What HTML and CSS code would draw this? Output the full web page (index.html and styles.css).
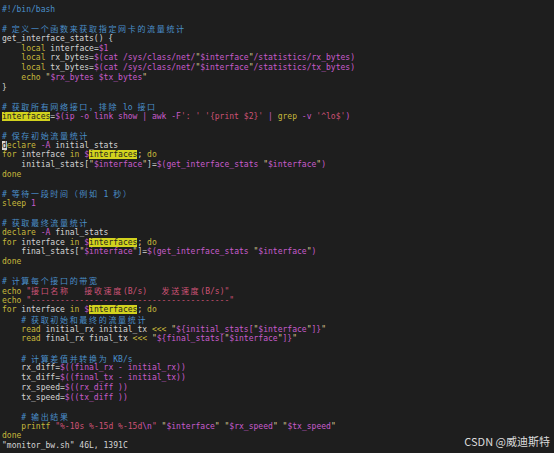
FILE: index.html
```html
<!DOCTYPE html>
<html>
<head>
    <title>monitor_bw.sh - vim</title>
    <meta charset="UTF-8">
    <link rel="stylesheet" href="styles.css">
</head>
<body>
    <div class="terminal">
        <div class="line"><span class="c">#!/bin/bash</span></div>
        <div class="line"></div>
        <div class="line"><span class="c"># <span class="w">定义一个函数来获取指定网卡的流量统计</span></span></div>
        <div class="line">get_interface_stats() {</div>
        <div class="line">    <span class="k">local</span> interface=<span class="v">$1</span></div>
        <div class="line">    <span class="k">local</span> rx_bytes=<span class="v">$(cat /sys/class/net/</span><span class="q">"</span><span class="v">$interface</span><span class="q">"</span><span class="v">/statistics/rx_bytes)</span></div>
        <div class="line">    <span class="k">local</span> tx_bytes=<span class="v">$(cat /sys/class/net/</span><span class="q">"</span><span class="v">$interface</span><span class="q">"</span><span class="v">/statistics/tx_bytes)</span></div>
        <div class="line">    <span class="k">echo</span> <span class="q">"</span><span class="v">$rx_bytes $tx_bytes</span><span class="q">"</span></div>
        <div class="line">}</div>
        <div class="line"></div>
        <div class="line"><span class="c"># <span class="w">获取所有网络接口，排除</span> lo <span class="w">接口</span></span></div>
        <div class="line"><span class="hl">interfaces</span>=<span class="v">$(ip -o link show | awk -F</span><span class="s">': '</span> <span class="s">'{print $2}'</span><span class="v"> | </span><span class="k">grep</span> <span class="v">-v</span> <span class="s">'^lo$'</span><span class="v">)</span></div>
        <div class="line"></div>
        <div class="line"><span class="c"># <span class="w">保存初始流量统计</span></span></div>
        <div class="line"><span class="k"><span class="cur">d</span>eclare</span> <span class="v">-A</span> initial_stats</div>
        <div class="line"><span class="k">for</span> interface <span class="k">in</span> <span class="v">$</span><span class="hl">interfaces</span>; <span class="k">do</span></div>
        <div class="line">    initial_stats[<span class="q">"</span><span class="v">$interface</span><span class="q">"</span>]=<span class="v">$(get_interface_stats </span><span class="q">"</span><span class="v">$interface</span><span class="q">"</span><span class="v">)</span></div>
        <div class="line"><span class="k">done</span></div>
        <div class="line"></div>
        <div class="line"><span class="c"># <span class="w">等待一段时间（例如</span> 1 <span class="w">秒）</span></span></div>
        <div class="line"><span class="k">sleep</span> <span class="v">1</span></div>
        <div class="line"></div>
        <div class="line"><span class="c"># <span class="w">获取最终流量统计</span></span></div>
        <div class="line"><span class="k">declare</span> <span class="v">-A</span> final_stats</div>
        <div class="line"><span class="k">for</span> interface <span class="k">in</span> <span class="v">$</span><span class="hl">interfaces</span>; <span class="k">do</span></div>
        <div class="line">    final_stats[<span class="q">"</span><span class="v">$interface</span><span class="q">"</span>]=<span class="v">$(get_interface_stats </span><span class="q">"</span><span class="v">$interface</span><span class="q">"</span><span class="v">)</span></div>
        <div class="line"><span class="k">done</span></div>
        <div class="line"></div>
        <div class="line"><span class="c"># <span class="w">计算每个接口的带宽</span></span></div>
        <div class="line"><span class="k">echo</span> <span class="s">"<span class="w">接口名称</span>   <span class="w">接收速度</span>(B/s)   <span class="w">发送速度</span>(B/s)"</span></div>
        <div class="line"><span class="k">echo</span> <span class="s">"-----------------------------------------"</span></div>
        <div class="line"><span class="k">for</span> interface <span class="k">in</span> <span class="v">$</span><span class="hl">interfaces</span>; <span class="k">do</span></div>
        <div class="line">    <span class="c"># <span class="w">获取初始和最终的流量统计</span></span></div>
        <div class="line">    <span class="k">read</span> initial_rx initial_tx <span class="k">&lt;&lt;&lt;</span> <span class="q">"</span><span class="v">${initial_stats[</span><span class="q">"</span><span class="v">$interface</span><span class="q">"</span><span class="v">]}</span><span class="q">"</span></div>
        <div class="line">    <span class="k">read</span> final_rx final_tx <span class="k">&lt;&lt;&lt;</span> <span class="q">"</span><span class="v">${final_stats[</span><span class="q">"</span><span class="v">$interface</span><span class="q">"</span><span class="v">]}</span><span class="q">"</span></div>
        <div class="line"></div>
        <div class="line">    <span class="c"># <span class="w">计算差值并转换为</span> KB/s</span></div>
        <div class="line">    rx_diff=<span class="v">$((final_rx - initial_rx))</span></div>
        <div class="line">    tx_diff=<span class="v">$((final_tx - initial_tx))</span></div>
        <div class="line">    rx_speed=<span class="v">$((rx_diff ))</span></div>
        <div class="line">    tx_speed=<span class="v">$((tx_diff ))</span></div>
        <div class="line"></div>
        <div class="line">    <span class="c"># <span class="w">输出结果</span></span></div>
        <div class="line">    <span class="k">printf</span> <span class="s">"%-10s %-15d %-15d<span class="v">\n</span>"</span> <span class="q">"</span><span class="v">$interface</span><span class="q">"</span> <span class="q">"</span><span class="v">$rx_speed</span><span class="q">"</span> <span class="q">"</span><span class="v">$tx_speed</span><span class="q">"</span></div>
        <div class="line"><span class="k">done</span></div>
        <div class="line">"monitor_bw.sh" 46L, 1391C</div>
    </div>
    <div class="watermark">CSDN @威迪斯特</div>
</body>
</html>
```

FILE: styles.css
```css
html, body {
    margin: 0;
    background: #1e1e1e;
}
body {
    position: relative;
    width: 554px;
    height: 453px;
    overflow: hidden;
}
.terminal {
    padding: 5px 0 0 2px;
    font-family: "DejaVu Sans Mono", monospace;
    font-size: 8.04px;
    color: #d4d4d4;
}
.line {
    height: 9.7px;
    line-height: 9.7px;
    white-space: pre;
}
/* CJK glyphs take two terminal cells */
.w {
    font-family: "Noto Sans CJK SC", sans-serif;
    letter-spacing: 1.64px;
}
.c {
    color: #4a8fca;
}
.k {
    color: #c6b83c;
}
.v {
    color: #c75ccc;
}
.s {
    color: #cc5275;
}
.q {
    color: #d6c78e;
}
.hl {
    background: #d2d21e;
    color: #1e1e1e;
}
.cur {
    background: #d8d8d8;
    color: #1e1e1e;
}
.watermark {
    position: absolute;
    right: 4px;
    bottom: 4px;
    font-family: "Noto Sans CJK SC", sans-serif;
    font-size: 11px;
    color: #dcdcdc;
}
```
